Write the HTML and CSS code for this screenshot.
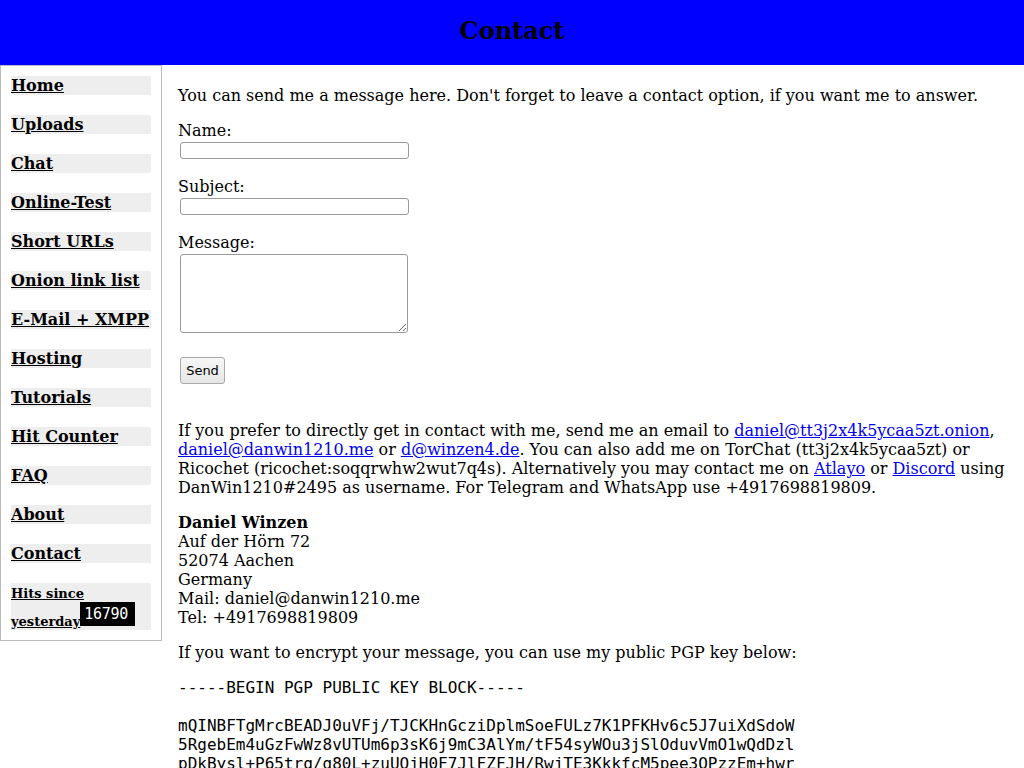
FILE: index.html
```html
<!DOCTYPE html>
<html lang="en">
<head>
<meta charset="utf-8">
<title>Contact</title>
<link rel="stylesheet" href="styles.css">
</head>
<body>
<header class="top">
  <h1 class="title">Contact</h1>
</header>
<div class="layout">
  <nav class="menu">
    <div class="menu-item"><a href="#">Home</a></div>
    <div class="menu-item"><a href="#">Uploads</a></div>
    <div class="menu-item"><a href="#">Chat</a></div>
    <div class="menu-item"><a href="#">Online-Test</a></div>
    <div class="menu-item"><a href="#">Short URLs</a></div>
    <div class="menu-item"><a href="#">Onion link list</a></div>
    <div class="menu-item"><a href="#">E-Mail + XMPP</a></div>
    <div class="menu-item"><a href="#">Hosting</a></div>
    <div class="menu-item"><a href="#">Tutorials</a></div>
    <div class="menu-item"><a href="#">Hit Counter</a></div>
    <div class="menu-item"><a href="#">FAQ</a></div>
    <div class="menu-item"><a href="#">About</a></div>
    <div class="menu-item"><a href="#">Contact</a></div>
    <div class="menu-item hits"><a href="#"><small>Hits since yesterday</small></a><span class="counter">16790</span></div>
  </nav>
  <main class="content">
    <p>You can send me a message here. Don't forget to leave a contact option, if you want me to answer.</p>
    <form class="contact-form">
      <div class="field"><label class="field-label">Name:</label><input class="text-input" type="text"></div>
      <div class="field"><label class="field-label">Subject:</label><input class="text-input" type="text"></div>
      <div class="field"><label class="field-label">Message:</label><textarea class="text-area"></textarea></div>
      <div class="actions"><button class="send" type="button">Send</button></div>
    </form>
    <p>If you prefer to directly get in contact with me, send me an email to <a href="#">daniel@tt3j2x4k5ycaa5zt.onion</a>, <a href="#">daniel@danwin1210.me</a> or <a href="#">d@winzen4.de</a>. You can also add me on TorChat (tt3j2x4k5ycaa5zt) or Ricochet (ricochet:soqqrwhw2wut7q4s). Alternatively you may contact me on <a href="#">Atlayo</a> or <a href="#">Discord</a> using DanWin1210#2495 as username. For Telegram and WhatsApp use +4917698819809.</p>
    <p><b>Daniel Winzen</b><br>Auf der Hörn 72<br>52074 Aachen<br>Germany<br>Mail: daniel@danwin1210.me<br>Tel: +4917698819809</p>
    <p>If you want to encrypt your message, you can use my public PGP key below:</p>
<pre class="pgp">-----BEGIN PGP PUBLIC KEY BLOCK-----

mQINBFTgMrcBEADJ0uVFj/TJCKHnGcziDplmSoeFULz7K1PFKHv6c5J7uiXdSdoW
5RgebEm4uGzFwWz8vUTUm6p3sK6j9mC3AlYm/tF54syWOu3jSlOduvVmO1wQdDzl
pDkBysl+P65trq/g80L+zuUOjH0F7JlFZFJH/RwjTE3KkkfcM5pee3OPzzEm+hwr</pre>
  </main>
</div>
</body>
</html>
```
FILE: styles.css
```css
html, body {
  margin: 0;
  padding: 0;
  background: #fff;
}
body {
  font-family: "DejaVu Serif", serif;
  font-size: 16px;
  line-height: 19px;
  color: #000;
}
a {
  color: #0000ee;
}
.top {
  background: #0000ff;
  height: 65px;
  box-sizing: border-box;
  padding-top: 17px;
  text-align: center;
}
.title {
  margin: 0;
  font-size: 24px;
  line-height: 28px;
  font-weight: bold;
}
.layout {
  display: flex;
  align-items: flex-start;
}
.menu {
  flex: 0 0 auto;
  width: 140px;
  padding: 10px;
  border: 1px solid #bbb;
  display: flex;
  flex-direction: column;
  gap: 20px;
}
.menu-item {
  background: #eee;
  font-weight: bold;
  height: 19px;
  white-space: nowrap;
}
.menu-item a {
  color: #000;
}
.menu-item.hits {
  height: auto;
  white-space: normal;
  line-height: normal;
}
.hits small {
  font-size: 13px;
}
.counter {
  display: inline-block;
  overflow: hidden;
  width: 55px;
  height: 24px;
  box-sizing: border-box;
  padding-left: 4px;
  background: #000;
  color: #fff;
  font-family: "DejaVu Sans Mono", monospace;
  font-weight: normal;
  font-size: 15px;
  line-height: 24px;
  letter-spacing: -0.3px;
  text-align: left;
}
.content {
  flex: 1 1 auto;
  padding: 5px 8px 0 16px;
  min-width: 0;
}
.content p {
  margin: 16px 0;
}
.contact-form {
  margin: 0 0 37px 0;
}
.field {
  margin: 16px 0;
  padding-bottom: 2px;
}
.field-label {
  display: block;
}
.text-input {
  display: block;
  box-sizing: border-box;
  width: 229px;
  height: 17px;
  margin: 2px 2px 0 2px;
  padding: 0 2px;
  border: 1px solid #999;
  border-radius: 3px;
  background: #fff;
  font-size: 12px;
}
.text-area {
  display: block;
  box-sizing: border-box;
  width: 228px;
  height: 79px;
  margin: 2px 2px 0 2px;
  border: 1px solid #999;
  border-radius: 3px;
  background: #fff;
  resize: both;
}
.actions {
  margin: 22px 0 0 0;
}
.send {
  display: block;
  box-sizing: border-box;
  margin: 0 2px;
  width: 45px;
  height: 27px;
  padding: 0;
  border: 1px solid #a9a9a9;
  border-radius: 3px;
  background: linear-gradient(#f7f7f7, #e6e6e6);
  font-family: "DejaVu Sans", sans-serif;
  font-size: 13px;
  color: #000;
}
.pgp {
  margin: 16px 0;
  font-family: "DejaVu Sans Mono", monospace;
  font-size: 16px;
  line-height: 19px;
}
```
